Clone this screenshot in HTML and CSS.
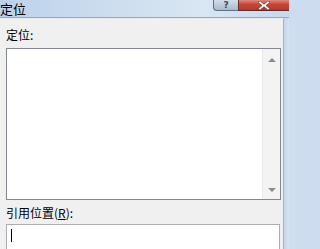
FILE: index.html
```html
<!DOCTYPE html>
<html lang="zh">
<head>
<meta charset="utf-8">
<link rel="stylesheet" href="styles.css">
</head>
<body>
<div class="window">
  <div class="titlebar">
    <span class="title">定位</span>
    <div class="caption-buttons">
      <span class="btn-help">?</span>
      <span class="btn-close">
        <svg width="12" height="9" viewBox="0 0 12 9"><path d="M2 0 L6 3.2 L10 0 L12 1.2 L8 4.5 L12 7.8 L10 9 L6 5.8 L2 9 L0 7.8 L4 4.5 L0 1.2 Z" fill="#fff" stroke="#6d1d15" stroke-width="0.6"/></svg>
      </span>
    </div>
  </div>
  <div class="frame">
    <div class="panel">
      <div class="label">定位:</div>
      <div class="listbox">
        <div class="list-area"></div>
        <div class="scrollbar">
          <span class="arrow up"></span>
          <span class="arrow down"></span>
        </div>
      </div>
      <div class="label label2">引用位置(<u>R</u>):</div>
      <div class="input"><span class="caret"></span></div>
    </div>
    <div class="edge"></div>
  </div>
</div>
</body>
</html>
```
FILE: styles.css
```css
html, body {
  margin: 0;
  padding: 0;
}
body {
  width: 289px;
  height: 249px;
  overflow: hidden;
  font-family: "Noto Sans CJK SC", "Noto Sans", sans-serif;
  background: #cddcee;
}
.window {
  display: flex;
  flex-direction: column;
  height: 249px;
}
.titlebar {
  height: 20px;
  box-sizing: border-box;
  display: flex;
  align-items: flex-start;
  background: linear-gradient(to right, #bcd2ea 0%, #cfdfef 45%, #d9e6f3 70%, #c6d9ee 100%);
  border-bottom: 1px solid #95a8bf;
}
.title {
  font-size: 13px;
  line-height: 17px;
  color: #000;
}
.caption-buttons {
  margin-left: auto;
  display: flex;
}
.btn-help {
  width: 25px;
  height: 11px;
  box-sizing: border-box;
  border: 1px solid #5f7187;
  border-top: none;
  border-right: none;
  border-radius: 0 0 0 4px;
  background: linear-gradient(to bottom, #d3dde9, #a9b8ca);
  font-family: "DejaVu Sans", sans-serif;
  font-size: 9px;
  line-height: 10px;
  font-weight: bold;
  color: #3c4656;
  text-align: center;
}
.btn-close {
  width: 51px;
  height: 11px;
  box-sizing: border-box;
  border-bottom: 1px solid #6b2a22;
  border-left: 1px solid #6b2a22;
  background: linear-gradient(to bottom, #d98b80 0%, #c8463a 45%, #b8372b 100%);
  display: flex;
  justify-content: center;
  align-items: flex-end;
  overflow: hidden;
}
.btn-close svg {
  display: block;
}
.frame {
  flex: 1;
  display: flex;
}
.panel {
  width: 284px;
  box-sizing: border-box;
  background: #f0f0f0;
  border-top: 1px solid #e6ebf1;
  border-right: 1px solid #a7b2bf;
  padding: 8px 0 0 6px;
}
.edge {
  flex: 1;
  background: linear-gradient(to right, #c4d6ea, #d6e3f1);
}
.label {
  font-size: 12px;
  line-height: 16px;
  height: 16px;
  color: #000;
}
.label u {
  text-decoration: underline;
  text-underline-offset: 1px;
}
.listbox {
  margin-top: 5px;
  width: 275px;
  height: 152px;
  box-sizing: border-box;
  border: 1px solid #828790;
  background: #fff;
  display: flex;
}
.list-area {
  flex: 1;
}
.scrollbar {
  width: 17px;
  background: #f3f3f3;
  border-left: 1px solid #ececec;
  display: flex;
  flex-direction: column;
  justify-content: space-between;
  align-items: center;
  padding: 9px 0 7px;
}
.arrow {
  width: 0;
  height: 0;
  border-left: 4px solid transparent;
  border-right: 4px solid transparent;
}
.arrow.up {
  border-bottom: 4px solid #8c8c8c;
}
.arrow.down {
  border-top: 4px solid #8c8c8c;
}
.label2 {
  margin-top: 5px;
}
.input {
  margin-top: 3px;
  width: 274px;
  height: 26px;
  box-sizing: border-box;
  border: 1px solid #abadb3;
  border-bottom: none;
  background: #fff;
  padding: 4px 0 0 4px;
}
.caret {
  display: block;
  width: 1px;
  height: 13px;
  background: #000;
}
```
